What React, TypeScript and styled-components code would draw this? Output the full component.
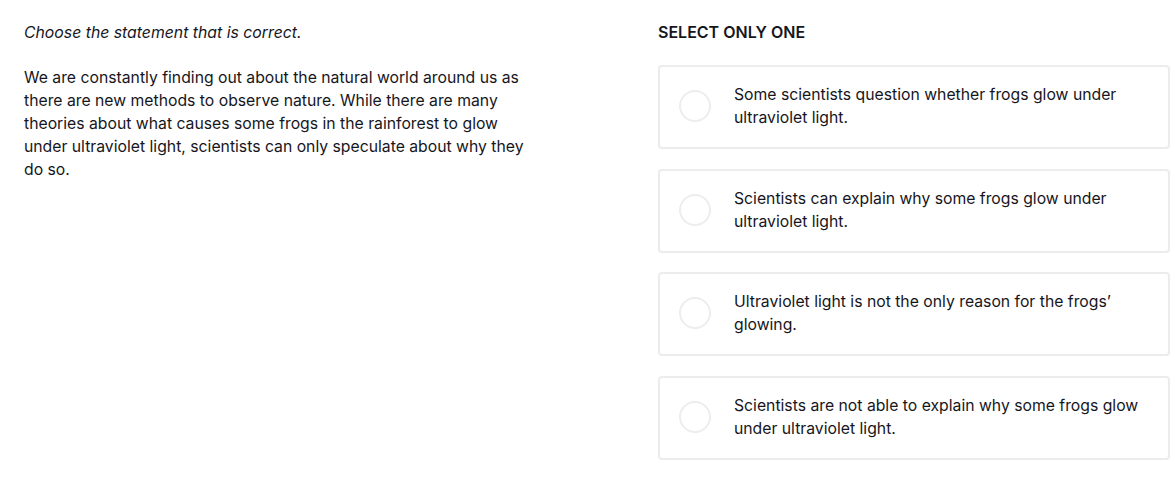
import React from "react";
import styled, { createGlobalStyle } from "styled-components";

const Global = createGlobalStyle`
  html, body { margin: 0; padding: 0; background: #ffffff; }
  body { font-family: Inter, "Liberation Sans", sans-serif; color: #16161c; }
  * { box-sizing: border-box; }
`;

const Page = styled.div`
  display: grid;
  grid-template-columns: 1fr 512px;
  column-gap: 24px;
  padding: 21px 5px 0 24px;
`;

const LeftCol = styled.div`
  display: flex;
  flex-direction: column;
  gap: 22px;
`;

const Prompt = styled.p`
  margin: 0;
  font-size: 15.8px;
  line-height: 23px;
  font-style: italic;
`;

const Passage = styled.p`
  margin: 0;
  max-width: 503px;
  font-size: 15.75px;
  line-height: 23px;
`;

const RightCol = styled.div`
  display: flex;
  flex-direction: column;
`;

const Heading = styled.div`
  font-size: 16px;
  line-height: 23px;
  font-weight: 600;
  text-transform: uppercase;
  margin-bottom: 21px;
`;

const Options = styled.div`
  display: flex;
  flex-direction: column;
  gap: 19.67px;
`;

const Card = styled.label`
  display: flex;
  align-items: center;
  height: 84px;
  padding: 0 20px 2px 19px;
  border: 2px solid #ececec;
  border-radius: 4px;
  background: #fff;
  cursor: pointer;
`;

const Radio = styled.span`
  flex: 0 0 auto;
  width: 32px;
  height: 32px;
  border-radius: 50%;
  border: 2px solid #ededed;
  margin-right: 23px;
`;

const OptionText = styled.span`
  font-size: 15.75px;
  line-height: 23px;
`;

const options = [
  "Some scientists question whether frogs glow under ultraviolet light.",
  "Scientists can explain why some frogs glow under ultraviolet light.",
  "Ultraviolet light is not the only reason for the frogs\u2019 glowing.",
  "Scientists are not able to explain why some frogs glow under ultraviolet light.",
];

export default function App() {
  return (
    <>
      <Global />
      <Page>
        <LeftCol>
          <Prompt>Choose the statement that is correct.</Prompt>
          <Passage>
            We are constantly finding out about the natural world around us as
            there are new methods to observe nature. While there are many
            theories about what causes some frogs in the rainforest to glow
            under ultraviolet light, scientists can only speculate about why
            they do so.
          </Passage>
        </LeftCol>
        <RightCol>
          <Heading>Select only one</Heading>
          <Options>
            {options.map((o) => (
              <Card key={o}>
                <Radio />
                <OptionText>{o}</OptionText>
              </Card>
            ))}
          </Options>
        </RightCol>
      </Page>
    </>
  );
}
